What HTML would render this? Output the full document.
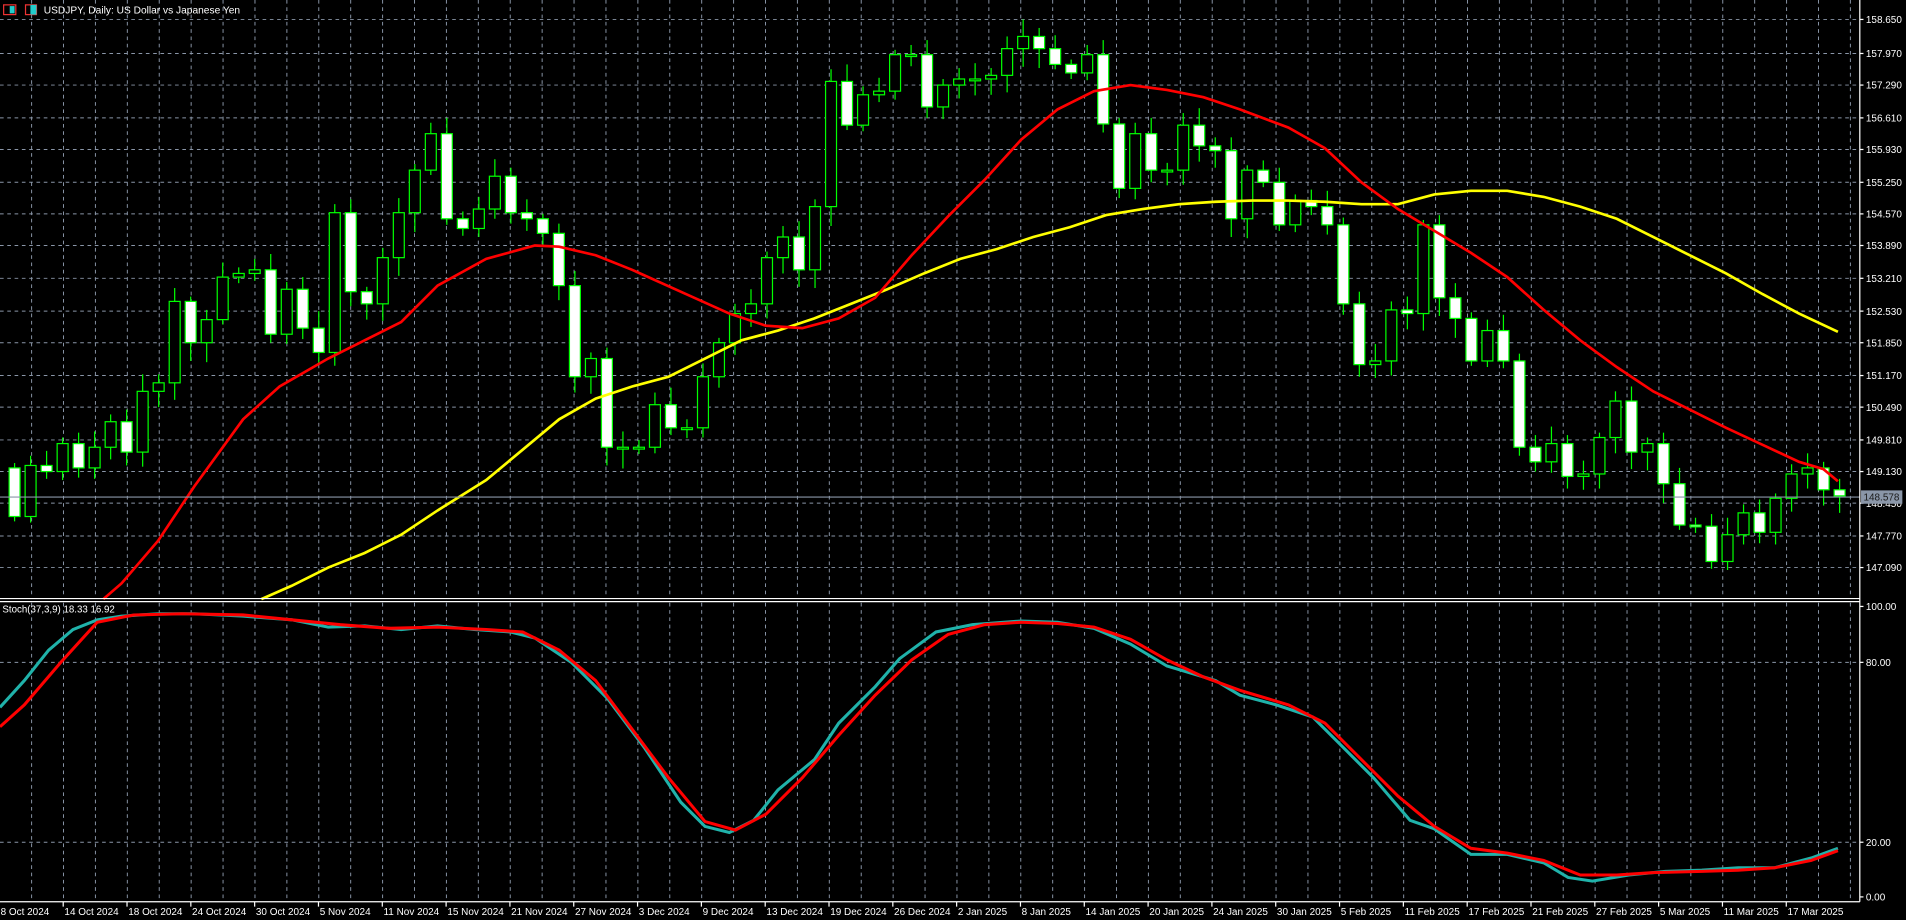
<!DOCTYPE html>
<html><head><meta charset="utf-8"><style>
html,body{margin:0;padding:0;background:#000;width:1906px;height:920px;overflow:hidden}
svg{display:block}
text{font-family:"Liberation Sans",sans-serif;fill:#fff}
</style></head><body>
<svg id="s" width="1906" height="920" viewBox="0 0 1568 757" preserveAspectRatio="none" xmlns="http://www.w3.org/2000/svg">
<rect width="1568" height="757" fill="#000"/>
<g id="grid" stroke="#8a96a8" stroke-width="0.8" stroke-dasharray="3,3"></g>
<g id="candles"></g>
<polyline id="yel" fill="none" stroke="#ffff00" stroke-width="2.2"/>
<polyline id="red" fill="none" stroke="#ff0000" stroke-width="2.2"/>
<polyline id="stm" fill="none" stroke="#20b2aa" stroke-width="2.5"/>
<polyline id="sts" fill="none" stroke="#ff0000" stroke-width="2.5"/>
<line x1="0" y1="409" x2="1530" y2="409" stroke="#8a96a8" stroke-width="1"/>
<line x1="0" y1="492.5" x2="1530" y2="492.5" stroke="#fff" stroke-width="1"/>
<line x1="0" y1="495" x2="1530" y2="495" stroke="#fff" stroke-width="1"/>
<line x1="1530" y1="0" x2="1530" y2="742" stroke="#fff" stroke-width="1"/>
<line x1="0" y1="742" x2="1530" y2="742" stroke="#fff" stroke-width="1"/>
<g id="axis" font-size="8.2"></g>
<rect x="1531" y="403.5" width="34" height="11" fill="#8a96a8"/>
<text x="1533" y="412" font-size="8.2" style="fill:#1a1a1a">148.578</text>
<g>
<rect x="3" y="4" width="10" height="8" fill="none" stroke="#e33" stroke-width="1"/>
<rect x="8" y="5" width="4" height="6" fill="#2cc"/>
<rect x="21" y="4" width="9" height="8" fill="none" stroke="#e33" stroke-width="1"/>
<rect x="25" y="4" width="5" height="8" fill="#2cc"/>
</g>
<text x="36" y="11" font-size="8.4">USDJPY, Daily:  US Dollar vs Japanese Yen</text>
<text x="2" y="504" font-size="8">Stoch(37,3,9) 18.33 16.92</text>
</svg>
<script>
var NS="http://www.w3.org/2000/svg";
function el(p,t,a,txt){var e=document.createElementNS(NS,t);for(var k in a)e.setAttribute(k,a[k]);if(txt!=null)e.textContent=txt;p.appendChild(e);return e;}
var g=document.getElementById('grid');
var hy=[16,44,70,97,123,150,176,202,229,256,282,309,335,362,388,414,441,467];
hy.forEach(function(y){el(g,'line',{x1:0,y1:y,x2:1530,y2:y});});
[545,693].forEach(function(y){el(g,'line',{x1:0,y1:y,x2:1530,y2:y});});
for(var x=26;x<1530;x+=26.25){el(g,'line',{x1:x,y1:0,x2:x,y2:492});el(g,'line',{x1:x,y1:496,x2:x,y2:742});}
var ax=document.getElementById('axis');
var pl=["158.650","157.970","157.290","156.610","155.930","155.250","154.570","153.890","153.210","152.530","151.850","151.170","150.490","149.810","149.130","148.450","147.770","147.090"];
hy.forEach(function(y,i){el(ax,'line',{x1:1530,y1:y,x2:1533,y2:y,stroke:'#fff'});el(ax,'text',{x:1535,y:y+3},pl[i]);});
[[499,"100.00"],[545,"80.00"],[693,"20.00"],[738,"0.00"]].forEach(function(a){el(ax,'line',{x1:1530,y1:a[0],x2:1533,y2:a[0],stroke:'#fff'});el(ax,'text',{x:1535,y:a[0]+3},a[1]);});
var dates=["8 Oct 2024","14 Oct 2024","18 Oct 2024","24 Oct 2024","30 Oct 2024","5 Nov 2024","11 Nov 2024","15 Nov 2024","21 Nov 2024","27 Nov 2024","3 Dec 2024","9 Dec 2024","13 Dec 2024","19 Dec 2024","26 Dec 2024","2 Jan 2025","8 Jan 2025","14 Jan 2025","20 Jan 2025","24 Jan 2025","30 Jan 2025","5 Feb 2025","11 Feb 2025","17 Feb 2025","21 Feb 2025","27 Feb 2025","5 Mar 2025","11 Mar 2025","17 Mar 2025"];
dates.forEach(function(d,i){var x=-0.5+52.5*i;el(ax,'line',{x1:x,y1:742,x2:x,y2:746,stroke:'#fff'});el(ax,'text',{x:x+1,y:753},d);});
var c=[425,383,388,365,385,368,347,372,322,315,248,282,263,228,225,222,275,238,270,290,175,240,250,212,175,140,110,180,188,172,145,175,180,192,235,310,295,368,368,368,333,352,352,310,282,258,250,212,195,222,170,67,103,78,75,45,45,88,70,65,65,62,40,30,40,53,60,45,102,155,110,140,140,103,120,124,180,140,150,185,165,170,185,250,300,297,255,258,185,245,262,297,272,297,368,380,365,392,390,360,330,372,365,398,432,433,462,440,422,438,410,390,385,403,408];
var cg=document.getElementById('candles');var prev=385;
c.forEach(function(cl,i){var x=12+13.17*i;var o=prev;prev=cl;var t=Math.min(o,cl),b=Math.max(o,cl);if(b-t<1.5){b=t+1.5;}
var r1=4+((i*37)%11),r2=4+((i*53)%13);
el(cg,'line',{x1:x,y1:t-r1,x2:x,y2:b+r2,stroke:'#00ff00','stroke-width':1});
el(cg,'rect',{x:x-4.5,y:t,width:9,height:b-t,fill:(cl>o?'#fff':'#000'),stroke:'#00ff00','stroke-width':1});});
function pts(a){return a.map(function(p){return p[0]+','+p[1]}).join(' ');}
document.getElementById('red').setAttribute('points',pts([[85,493],[100,480],[130,445],[160,400],[200,345],[230,318],[270,295],[300,280],[330,265],[360,235],[400,213],[440,202],[460,203],[490,210],[520,222],[560,240],[600,258],[630,268],[660,270],[690,262],[720,245],[750,210],[780,178],[810,148],[840,115],[870,90],[900,75],[930,70],[960,74],[990,80],[1020,90],[1060,105],[1090,122],[1120,150],[1150,172],[1180,190],[1210,208],[1240,228],[1270,255],[1300,280],[1330,302],[1360,322],[1390,337],[1420,352],[1450,366],[1480,380],[1500,386],[1512,396]]));
document.getElementById('yel').setAttribute('points',pts([[215,493],[240,482],[270,467],[300,455],[330,440],[360,420],[400,395],[430,370],[460,345],[490,328],[520,318],[550,310],[580,295],[610,280],[640,272],[670,262],[700,250],[730,238],[760,225],[790,213],[820,205],[850,195],[880,187],[910,177],[940,172],[970,168],[1000,166],[1030,165],[1060,165],[1090,166],[1120,168],[1150,168],[1180,160],[1210,157],[1240,157],[1270,162],[1300,170],[1330,180],[1360,195],[1390,210],[1420,225],[1450,242],[1480,258],[1512,273]]));
document.getElementById('stm').setAttribute('points',pts([[0,582],[20,560],[40,535],[60,518],[80,510],[100,507],[130,505],[160,505],[200,507],[240,510],[270,516],[300,515],[330,518],[360,515],[390,518],[420,520],[440,525],[470,545],[500,575],[530,615],[560,660],[580,680],[600,685],[620,675],[640,650],[670,625],[690,595],[720,565],[740,542],[770,520],[800,514],[840,511],[870,512],[900,517],[930,530],[960,548],[1000,560],[1020,572],[1050,580],[1080,590],[1100,610],[1130,640],[1160,675],[1180,682],[1210,703],[1240,703],[1270,710],[1290,722],[1310,725],[1340,720],[1370,717],[1400,716],[1430,714],[1460,714],[1490,706],[1512,698]]));
document.getElementById('sts').setAttribute('points',pts([[0,598],[20,580],[50,545],[80,512],[110,506],[150,505],[200,506],[240,510],[280,514],[320,517],[360,516],[400,518],[430,520],[460,535],[490,560],[520,600],[550,640],[580,676],[605,683],[630,670],[660,640],[690,605],[720,572],[750,543],[780,522],[810,514],[840,512],[870,513],[900,516],[930,526],[960,543],[990,557],[1020,568],[1060,580],[1090,595],[1120,625],[1150,655],[1180,680],[1210,698],[1240,702],[1270,708],[1300,720],[1330,720],[1360,718],[1400,717],[1430,716],[1460,714],[1490,708],[1512,700]]));
</script>
</body></html>
